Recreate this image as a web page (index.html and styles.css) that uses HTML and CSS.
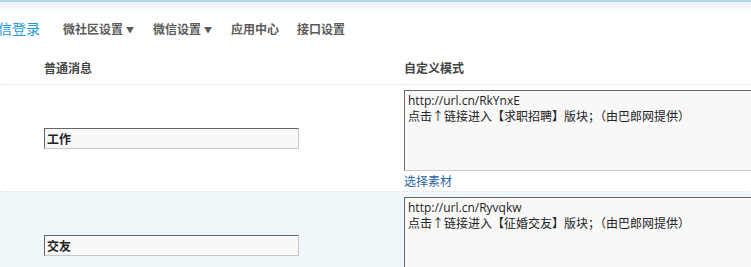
FILE: index.html
```html
<!DOCTYPE html>
<html>
<head>
  <meta charset="UTF-8">
  <title>微信登录 - 自定义回复</title>
  <link rel="stylesheet" href="styles.css">
</head>
<body>

<div class="topbar">
  <span class="brand">微信登录</span>
  <ul class="nav">
    <li>微社区设置<span class="caret">▼</span></li>
    <li>微信设置<span class="caret">▼</span></li>
    <li>应用中心</li>
    <li>接口设置</li>
  </ul>
</div>

<table class="reply-table">
  <tr class="head">
    <th class="col-key">普通消息</th>
    <th class="col-val">自定义模式</th>
  </tr>
  <tr>
    <td class="col-key"><input type="text" class="keyword" value="工作"></td>
    <td class="col-val">
      <textarea class="reply">http://url.cn/RkYnxE
点击↑链接进入【求职招聘】版块；（由巴郎网提供）</textarea>
      <a href="#" class="pick">选择素材</a>
    </td>
  </tr>
  <tr class="alt">
    <td class="col-key"><input type="text" class="keyword" value="交友"></td>
    <td class="col-val">
      <textarea class="reply">http://url.cn/Ryvqkw
点击↑链接进入【征婚交友】版块；（由巴郎网提供）</textarea>
      <a href="#" class="pick">选择素材</a>
    </td>
  </tr>
</table>

</body>
</html>
```

FILE: styles.css
```css
body {
  margin: 0;
  overflow: hidden;
  background: #fff;
  font-family: "Noto Sans CJK SC", sans-serif;
  font-size: 12px;
  color: #333;
}
.topbar {
  display: flex;
  align-items: center;
  height: 50px;
  padding-top: 4px;
  box-sizing: border-box;
  border-top: 2px solid #b6d4e4;
  background: linear-gradient(#e8f3fa, #fff 12px);
}
.brand {
  margin-left: -16px;
  font-size: 14px;
  color: #1a9ad6;
}
.nav {
  display: flex;
  list-style: none;
  margin: 0 0 0 23px;
  padding: 0;
}
.nav li {
  margin-right: 18px;
  font-size: 12px;
  font-weight: bold;
  color: #5a5a5a;
}
.caret {
  font-size: 8px;
  margin: 0 1px 0 3px;
  position: relative;
  top: -1px;
}
.reply-table {
  border-collapse: collapse;
  width: 900px;
}
.reply-table th {
  text-align: left;
  font-weight: bold;
  color: #444;
  height: 34px;
  padding: 0;
  border-bottom: 1px dotted #d2e2ec;
}
.reply-table td {
  padding: 5px 0 2px;
  vertical-align: middle;
  border-bottom: 1px dotted #d2e2ec;
}
.col-key {
  width: 360px;
  padding-left: 44px !important;
}
.alt {
  background: #f0f7fb;
}
.keyword {
  width: 255px;
  height: 21px;
  box-sizing: border-box;
  margin: 0 0 3px;
  padding: 0 2px;
  font-family: "Noto Sans CJK SC", sans-serif;
  font-size: 12px;
  font-weight: bold;
  color: #222;
  background: #f8f8f8;
  border: 1px solid;
  border-color: #666 #c8c8c8 #c8c8c8 #666;
}
.reply {
  display: block;
  width: 420px;
  height: 81px;
  box-sizing: border-box;
  margin: 0;
  padding: 2px 3px;
  resize: none;
  font-family: "Open Sans", "Noto Sans CJK SC", sans-serif;
  font-size: 12px;
  line-height: 16px;
  color: #222;
  background: #f8f8f8;
  border: 1px solid;
  border-color: #666 #c8c8c8 #c8c8c8 #666;
}
.pick {
  display: block;
  margin-top: 1px;
  line-height: 17px;
  color: #2a66a4;
  text-decoration: none;
}
```
